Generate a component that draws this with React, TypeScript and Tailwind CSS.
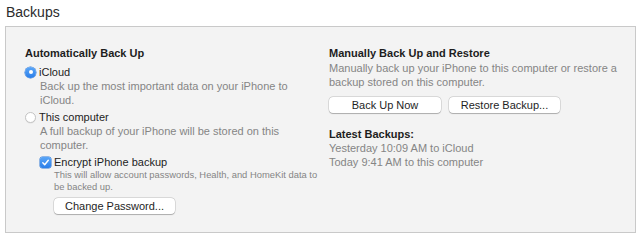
import React from "react";

function Radio({ checked }: { checked: boolean }) {
  if (checked) {
    return (
      <span className="flex h-[11px] w-[11px] shrink-0 items-center justify-center rounded-full bg-gradient-to-b from-[#5aa6f8] to-[#2a7ee8] shadow-[0_0_0_0.5px_#2f78d6]">
        <span className="h-[4px] w-[4px] rounded-full bg-white" />
      </span>
    );
  }
  return (
    <span className="h-[11px] w-[11px] shrink-0 rounded-full border border-[#c4c4c4] bg-white shadow-[0_0.5px_0.5px_rgba(0,0,0,0.08)]" />
  );
}

function Checkbox() {
  return (
    <span className="flex h-[11px] w-[11px] shrink-0 items-center justify-center rounded-[2.5px] bg-gradient-to-b from-[#5aa6f8] to-[#2a7ee8] shadow-[0_0_0_0.5px_#2f78d6]">
      <svg width="9" height="9" viewBox="0 0 9 9" fill="none">
        <path d="M1.8 4.8 L3.7 6.7 L7.3 2.2" stroke="white" strokeWidth="1.4" strokeLinecap="round" strokeLinejoin="round" />
      </svg>
    </span>
  );
}

function Button({ children, w }: { children: React.ReactNode; w: string }) {
  return (
    <div
      className={`${w} flex h-[16px] items-center justify-center rounded-[4px] bg-white text-[11px] leading-[14px] text-[#1e1e1e] shadow-[0_0_0_0.5px_rgba(0,0,0,0.18),0_0.5px_1px_rgba(0,0,0,0.22)]`}
    >
      {children}
    </div>
  );
}

export default function App() {
  return (
    <div
      className="h-[241px] w-[644px] bg-white"
      style={{ fontFamily: '"Liberation Sans", Arial, sans-serif' }}
    >
      <div className="px-[6px] pt-[2px] text-[14px] leading-[20px] text-[#2b2b2b]">Backups</div>
      <div className="ml-[5px] mt-[4px] flex h-[207px] w-[631px] border border-[#c9c9c9] bg-[#f3f3f3] pl-[19px] pt-[19px]">
        {/* Left column */}
        <div className="flex w-[304px] shrink-0 flex-col whitespace-nowrap text-[11px] leading-[14px]">
          <div className="font-bold text-[#1d1d1d]">Automatically Back Up</div>
          <div className="mt-[5px] flex items-center gap-[3px]">
            <Radio checked />
            <span className="text-[#1d1d1d]">iCloud</span>
          </div>
          <div className="pl-[15px] text-[#858585]">
            Back up the most important data on your iPhone to
            <br />
            iCloud.
          </div>
          <div className="mt-[3px] flex items-center gap-[3px]">
            <Radio checked={false} />
            <span className="text-[#1d1d1d]">This computer</span>
          </div>
          <div className="pl-[15px] text-[#858585]">
            A full backup of your iPhone will be stored on this
            <br />
            computer.
          </div>
          <div className="mt-[3px] flex items-center gap-[3px] pl-[15px]">
            <Checkbox />
            <span className="text-[#1d1d1d]">Encrypt iPhone backup</span>
          </div>
          <div className="pl-[29px] text-[9.4px] leading-[12px] text-[#858585]">
            This will allow account passwords, Health, and HomeKit data to
            <br />
            be backed up.
          </div>
          <div className="mt-[5px] pl-[29px]">
            <Button w="w-[121px]">Change Password...</Button>
          </div>
        </div>
        {/* Right column */}
        <div className="flex flex-col whitespace-nowrap text-[11px] leading-[14px]">
          <div className="font-bold text-[#1d1d1d]">Manually Back Up and Restore</div>
          <div className="mt-[1px] text-[#858585]">
            Manually back up your iPhone to this computer or restore a
            <br />
            backup stored on this computer.
          </div>
          <div className="mt-[8px] flex gap-[8px]">
            <Button w="w-[112px]">Back Up Now</Button>
            <Button w="w-[111px]">Restore Backup...</Button>
          </div>
          <div className="mt-[14px] font-bold text-[#1d1d1d]">Latest Backups:</div>
          <div className="text-[#858585]">
            Yesterday 10:09 AM to iCloud
            <br />
            Today 9:41 AM to this computer
          </div>
        </div>
      </div>
    </div>
  );
}
